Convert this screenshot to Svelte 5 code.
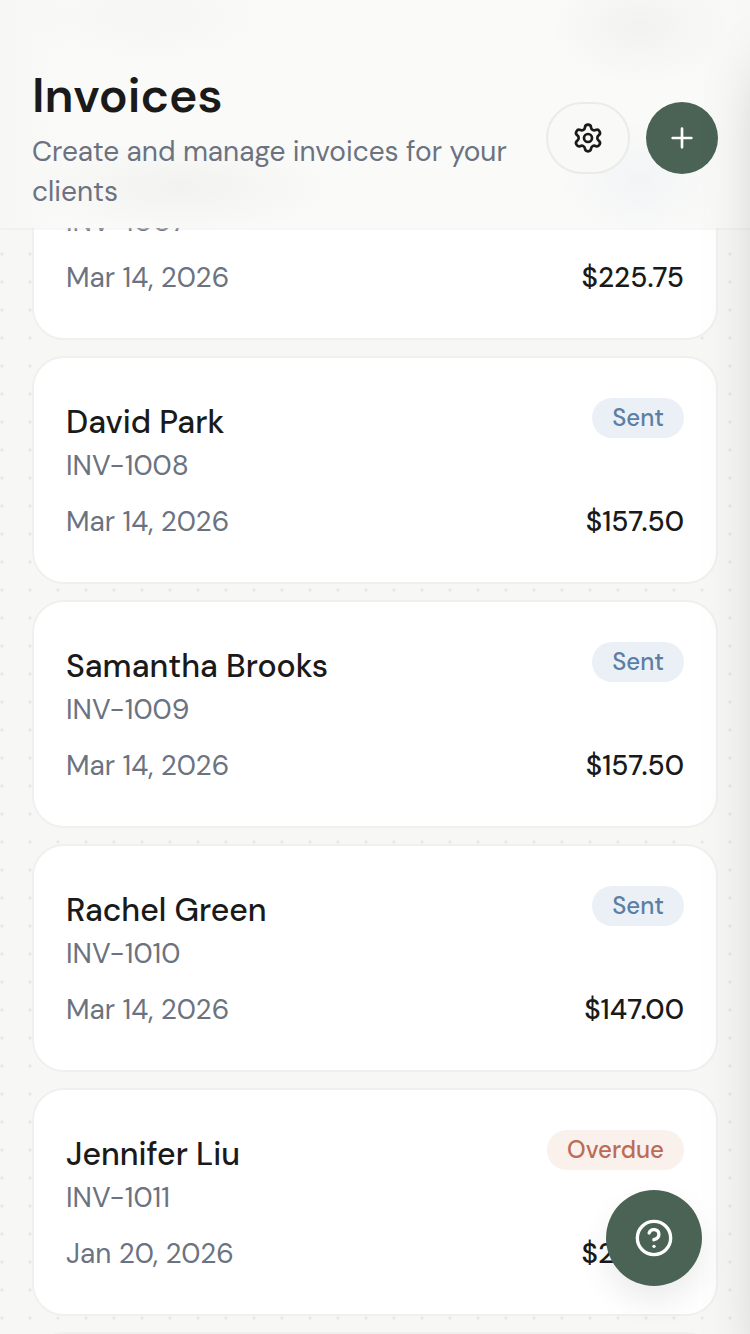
<script lang="ts">
	import { onMount } from 'svelte';

	type Invoice = {
		number: string;
		client: string;
		date: string;
		amount: string;
		status: 'Sent' | 'Overdue' | 'Paid';
	};

	const invoices: Invoice[] = [
		{ number: 'INV-1007', client: 'Mark Ellison', date: 'Mar 14, 2026', amount: '$225.75', status: 'Sent' },
		{ number: 'INV-1008', client: 'David Park', date: 'Mar 14, 2026', amount: '$157.50', status: 'Sent' },
		{ number: 'INV-1009', client: 'Samantha Brooks', date: 'Mar 14, 2026', amount: '$157.50', status: 'Sent' },
		{ number: 'INV-1010', client: 'Rachel Green', date: 'Mar 14, 2026', amount: '$147.00', status: 'Sent' },
		{ number: 'INV-1011', client: 'Jennifer Liu', date: 'Jan 20, 2026', amount: '$225.75', status: 'Overdue' },
		{ number: 'INV-1012', client: 'Daniel Reyes', date: 'Jan 20, 2026', amount: '$157.50', status: 'Paid' }
	];

	let scroller: HTMLElement;

	// start with the first invoice tucked halfway under the header
	onMount(() => {
		scroller.scrollTop = 134;
	});
</script>

<div class="app">
	<header class="header">
		<div class="heading">
			<h1>Invoices</h1>
			<p>Create and manage invoices for your clients</p>
		</div>
		<div class="actions">
			<button class="btn btn-outline" aria-label="Invoice settings">
				<svg viewBox="0 0 24 24" width="32" height="32">
					<path d="M9.671 4.136a2.34 2.34 0 0 1 4.659 0 2.34 2.34 0 0 0 3.319 1.915 2.34 2.34 0 0 1 2.33 4.033 2.34 2.34 0 0 0 0 3.831 2.34 2.34 0 0 1-2.33 4.033 2.34 2.34 0 0 0-3.319 1.915 2.34 2.34 0 0 1-4.659 0 2.34 2.34 0 0 0-3.32-1.915 2.34 2.34 0 0 1-2.33-4.033 2.34 2.34 0 0 0 0-3.831A2.34 2.34 0 0 1 6.35 6.051a2.34 2.34 0 0 0 3.319-1.915" />
					<circle cx="12" cy="12" r="3" />
				</svg>
			</button>
			<button class="btn btn-primary" aria-label="New invoice">
				<svg viewBox="0 0 24 24" width="32" height="32">
					<path d="M5 12h14M12 5v14" />
				</svg>
			</button>
		</div>
	</header>

	<main class="scroller" bind:this={scroller}>
		<div class="list">
			{#each invoices as invoice (invoice.number)}
				<article class="card">
					<div class="row row-top">
						<div>
							<h2>{invoice.client}</h2>
							<p class="muted">{invoice.number}</p>
						</div>
						<span class="badge {invoice.status.toLowerCase()}">{invoice.status}</span>
					</div>
					<div class="row">
						<span class="muted">{invoice.date}</span>
						<span class="amount">{invoice.amount}</span>
					</div>
				</article>
			{/each}
		</div>
	</main>

	<button class="help" aria-label="Help">
		<svg viewBox="0 0 24 24" width="40" height="40">
			<circle cx="12" cy="12" r="10" />
			<path d="M9.09 9a3 3 0 0 1 5.83 1c0 2-3 3-3 3" />
			<path d="M12 17h.01" />
		</svg>
	</button>

	<aside class="drawer" aria-hidden="true"></aside>
</div>

<style>
	:global(body) {
		margin: 0;
		overflow: hidden;
	}

	.app {
		position: relative;
		height: 100vh;
		overflow: hidden;
		font-family: 'DM Sans', Inter, 'Liberation Sans', sans-serif;
		color: #1a1a1a;
		background-color: #f7f7f5;
		background-image: radial-gradient(circle at 2px 2px, #e7e7e5 1px, transparent 2px);
		background-size: 28px 28px;
	}

	h1,
	h2,
	p {
		margin: 0;
	}

	svg {
		fill: none;
		stroke: currentColor;
		stroke-width: 2;
		stroke-linecap: round;
		stroke-linejoin: round;
	}

	.header {
		position: absolute;
		inset: 0 0 auto;
		z-index: 10;
		display: flex;
		align-items: center;
		justify-content: space-between;
		gap: 32px;
		box-sizing: border-box;
		padding: 64px 32px 16px;
		border-bottom: 2px solid rgba(230, 230, 228, 0.3);
		background:
			radial-gradient(130px 50px at 150px 16px, rgba(120, 125, 135, 0.03), transparent),
			radial-gradient(90px 60px at 640px 26px, rgba(90, 90, 90, 0.05), transparent),
			radial-gradient(160px 50px at 180px 186px, rgba(90, 90, 90, 0.05), transparent),
			radial-gradient(80px 60px at 640px 180px, rgba(130, 165, 220, 0.07), transparent),
			linear-gradient(90deg, #f7f7f5, #fafaf8 10%, #fafaf8 90%, #f8f8f6);
		background-clip: padding-box;
	}

	.heading {
		flex: 1;
	}

	h1 {
		font-size: 48px;
		font-weight: 600;
		line-height: 64px;
	}

	.heading p {
		margin-top: 4px;
		font-size: 28px;
		line-height: 40px;
		color: #6b7280;
	}

	.actions {
		display: flex;
		gap: 16px;
	}

	.btn {
		display: flex;
		align-items: center;
		justify-content: center;
		width: 72px;
		height: 72px;
		padding: 0;
		border: 0;
		border-radius: 36px;
		cursor: pointer;
	}

	.btn-outline {
		width: 84px;
		border: 2px solid #ebebe8;
		background: #f9f9f7;
		color: #1a1a1a;
	}

	.btn-primary,
	.help {
		background: #4a6354;
		color: #fff;
	}

	.scroller {
		height: 100%;
		overflow-y: auto;
		scrollbar-width: none;
	}

	.list {
		display: flex;
		flex-direction: column;
		gap: 16px;
		padding: 246px 32px 128px;
	}

	.card {
		padding: 40px 32px;
		border: 2px solid #f0f0ee;
		border-radius: 32px;
		background: #fff;
	}

	.row {
		display: flex;
		align-items: center;
		justify-content: space-between;
	}

	.row-top {
		align-items: flex-start;
		margin-bottom: 16px;
	}

	h2 {
		font-size: 32px;
		font-weight: 500;
		line-height: 48px;
	}

	.muted,
	.amount {
		font-size: 28px;
		line-height: 40px;
	}

	.muted {
		color: #6b7280;
	}

	.amount {
		font-weight: 500;
	}

	.badge {
		padding: 4px 20px;
		border-radius: 20px;
		font-size: 24px;
		font-weight: 500;
		line-height: 32px;
	}

	.sent {
		background: #ebf0f7;
		color: #5b7fa3;
	}

	.overdue {
		background: #faf0ec;
		color: #bc6c56;
	}

	.paid {
		background: #ebf2ed;
		color: #4a6354;
	}

	.help {
		position: absolute;
		right: 48px;
		bottom: 48px;
		z-index: 20;
		display: flex;
		align-items: center;
		justify-content: center;
		width: 96px;
		height: 96px;
		padding: 0;
		border: 0;
		border-radius: 50%;
		box-shadow: 0 16px 32px rgba(0, 0, 0, 0.08);
		cursor: pointer;
	}

	.drawer {
		position: absolute;
		top: 0;
		bottom: 0;
		left: 100%;
		z-index: 30;
		width: 320px;
		box-shadow: 0 50px 60px -20px rgba(0, 0, 0, 0.25);
		pointer-events: none;
	}
</style>
